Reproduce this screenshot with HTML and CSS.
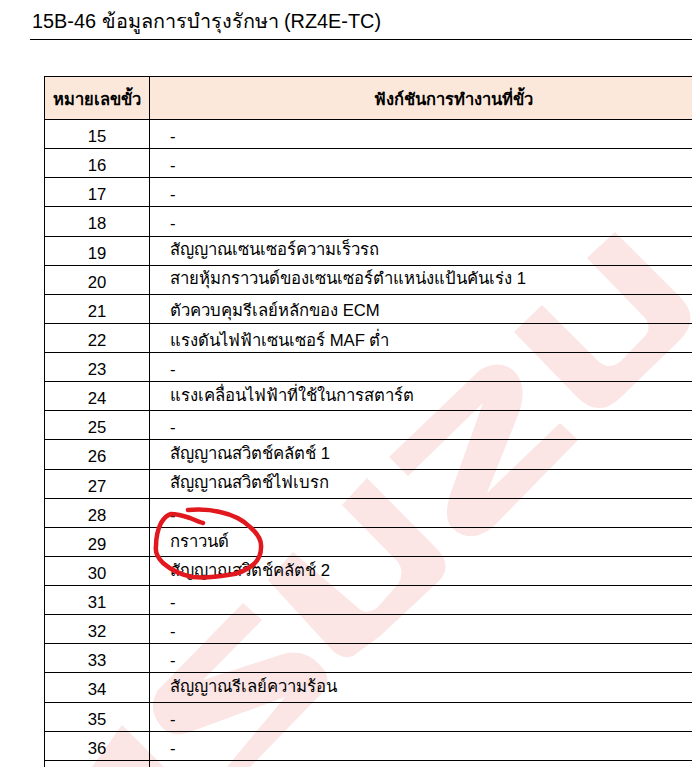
FILE: index.html
```html
<!DOCTYPE html>
<html lang="th">
<head>
<meta charset="utf-8">
<title>15B-46</title>
<link rel="stylesheet" href="styles.css">
</head>
<body>
<svg class="watermark" width="692" height="767" viewBox="0 0 692 767" aria-hidden="true">
  <path d="M587,258 L615,232 L680,297 Q701,318 680,340 L620,398 Q599,418 578,398 L514,332 L542,305 L598,361 Q609,371 621,361 L645,336 Q652,328 645,318 Z"/>
  <path d="M389,457 L480,370 Q500,358 515,372 Q527,385 520,410 L487,493 L560,423 L578,440 L493,527 Q470,545 452,528 Q443,518 450,495 L483,403 L408,476 Z"/>
  <path d="M293,552 L357,607 Q365,616 377,608 L398,584 Q405,573 398,562 L342,505 L367,478 L438,550 Q452,565 440,580 L380,636 L353,656 Q342,660 332,650 L268,580 Z"/>
  <path d="M243,603 L262,620 L203,680 L280,655 Q303,647 320,665 Q335,680 320,695 L250,767 L227,767 L285,697 L187,733 Q170,738 160,725 Q147,708 158,690 Z"/>
  <path d="M122,725 L164,767 L92,767 Z"/>
</svg>
<main class="page">
  <h1 class="title">15B-46 ข้อมูลการบำรุงรักษา (RZ4E-TC)</h1>
  <section class="table">
    <div class="row head"><div class="num">หมายเลขขั้ว</div><div class="fn">ฟังก์ชันการทำงานที่ขั้ว</div></div>
    <div class="row"><div class="num">15</div><div class="fn dash">-</div></div>
    <div class="row"><div class="num">16</div><div class="fn dash">-</div></div>
    <div class="row"><div class="num">17</div><div class="fn dash">-</div></div>
    <div class="row"><div class="num">18</div><div class="fn dash">-</div></div>
    <div class="row"><div class="num">19</div><div class="fn hi">สัญญาณเซนเซอร์ความเร็วรถ</div></div>
    <div class="row"><div class="num">20</div><div class="fn hi">สายหุ้มกราวนด์ของเซนเซอร์ตำแหน่งแป้นคันเร่ง 1</div></div>
    <div class="row"><div class="num">21</div><div class="fn lo">ตัวควบคุมรีเลย์หลักของ ECM</div></div>
    <div class="row"><div class="num">22</div><div class="fn lower">แรงดันไฟฟ้าเซนเซอร์ MAF ต่ำ</div></div>
    <div class="row"><div class="num">23</div><div class="fn dash">-</div></div>
    <div class="row"><div class="num">24</div><div class="fn">แรงเคลื่อนไฟฟ้าที่ใช้ในการสตาร์ต</div></div>
    <div class="row"><div class="num">25</div><div class="fn dash">-</div></div>
    <div class="row"><div class="num">26</div><div class="fn">สัญญาณสวิตช์คลัตช์ 1</div></div>
    <div class="row"><div class="num">27</div><div class="fn hi">สัญญาณสวิตช์ไฟเบรก</div></div>
    <div class="row"><div class="num">28</div><div class="fn dash">-</div></div>
    <div class="row"><div class="num">29</div><div class="fn">กราวนด์</div></div>
    <div class="row"><div class="num">30</div><div class="fn">สัญญาณสวิตช์คลัตช์ 2</div></div>
    <div class="row"><div class="num">31</div><div class="fn dash">-</div></div>
    <div class="row"><div class="num">32</div><div class="fn dash">-</div></div>
    <div class="row"><div class="num">33</div><div class="fn dash">-</div></div>
    <div class="row"><div class="num">34</div><div class="fn">สัญญาณรีเลย์ความร้อน</div></div>
    <div class="row"><div class="num">35</div><div class="fn dash">-</div></div>
    <div class="row"><div class="num">36</div><div class="fn dash">-</div></div>
    <div class="row"><div class="num"></div><div class="fn"></div></div>
  </section>
</main>
<svg class="ring" width="692" height="767" viewBox="0 0 692 767" aria-hidden="true">
  <path d="M188,510 C200,509 212,510 220,512 C234,515 243,520 250,527 C257,533 262,540 261,548 C261,555 258,560 254,564 C246,571 238,574 228,575 C216,577 204,578 193,577 C181,575 171,570 163,563 C157,557 155,552 156,546 C156,536 158,529 161,523 C164,518 167,515 171,514 C178,514 184,516 190,518 C195,520 199,522 203,523"/>
</svg>
</body>
</html>
```
FILE: styles.css
```css
html, body {
  margin: 0;
  padding: 0;
  height: 767px;
  overflow: hidden;
  background: #fff;
}
body {
  position: relative;
  font-family: "Liberation Sans", Arial, sans-serif;
  color: #000;
}
.watermark {
  position: absolute;
  left: 0;
  top: 0;
}
.watermark path {
  fill: #fbe5e5;
}
.ring {
  position: absolute;
  left: 0;
  top: 0;
}
.ring path {
  fill: none;
  stroke: #e2181f;
  stroke-width: 4.5;
  stroke-linecap: round;
  stroke-linejoin: round;
}
.page {
  position: relative;
  padding-left: 30px;
}
.title {
  margin: 0;
  height: 39px;
  padding: 9px 0 0 2px;
  box-sizing: border-box;
  font-size: 19.85px;
  line-height: 24px;
  font-weight: 400;
  box-shadow: 0 1px 0 #000;
}
.table {
  margin: 37px 0 0 14px;
  width: 712px;
  border-top: 1px solid #000;
  border-left: 1px solid #000;
}
.row {
  display: grid;
  grid-template-columns: 105px 1fr;
  height: 29.136px;
  box-sizing: border-box;
  border-bottom: 1px solid #000;
  font-size: 16.7px;
}
.row.head {
  height: 43px;
  background: #fce8da;
  font-size: 16.5px;
  font-weight: 700;
}
.num {
  border-right: 1px solid #000;
  text-align: center;
  line-height: 24px;
  padding-top: 5px;
}
.head .num {
  padding-top: 10px;
}
.fn {
  padding: 2px 0 0 20px;
  line-height: 24px;
}
.head .fn {
  padding: 10px 0 0;
  text-align: center;
}
.fn.dash { padding-top: 5px; }
.fn.hi { padding-top: 1px; }
.fn.lo { padding-top: 4px; }
.fn.lower { padding-top: 5px; }
```
